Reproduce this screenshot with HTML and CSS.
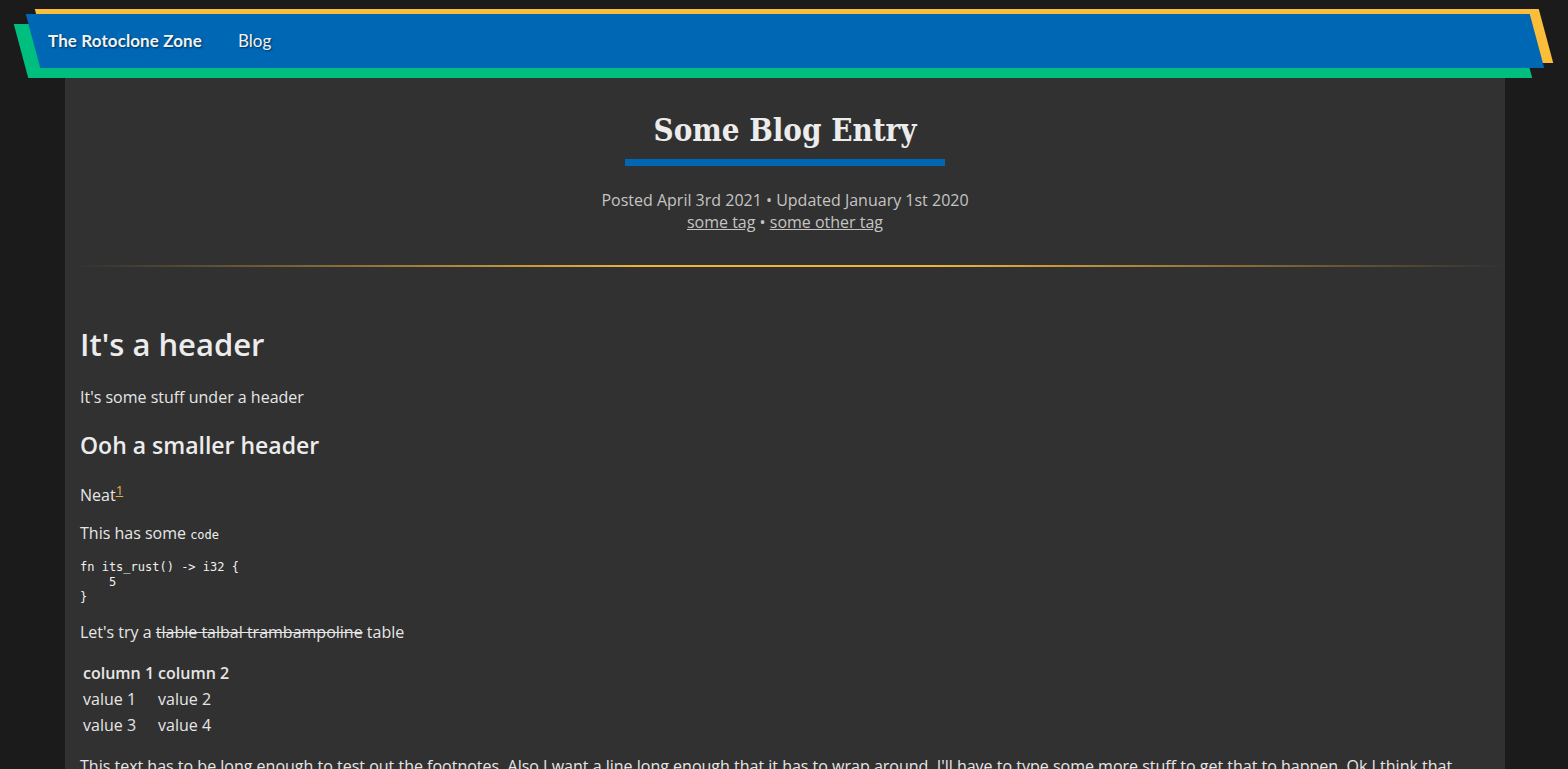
FILE: index.html
```html
<!DOCTYPE html>
<html lang="en">
<head>
<meta charset="utf-8">
<title>Some Blog Entry</title>
<link rel="stylesheet" href="styles.css">
</head>
<body>
<header class="site-header">
  <nav class="navbar">
    <span class="layer layer-yellow"></span>
    <span class="layer layer-green"></span>
    <span class="layer layer-blue"></span>
    <div class="nav-links">
      <a class="brand" href="#">The Rotoclone Zone</a>
      <a class="nav-link" href="#">Blog</a>
    </div>
  </nav>
</header>
<main class="page">
  <section class="post-header">
    <h1 class="post-title">Some Blog Entry</h1>
    <div class="title-bar"></div>
    <div class="post-meta">
      <div>Posted April 3rd 2021 • Updated January 1st 2020</div>
      <div><a href="#">some tag</a> • <a href="#">some other tag</a></div>
    </div>
  </section>
  <hr class="gold-rule">
  <article class="post-body">
    <h1>It's a header</h1>
    <p>It's some stuff under a header</p>
    <h2>Ooh a smaller header</h2>
    <p>Neat<sup><a class="fn" href="#">1</a></sup></p>
    <p>This has some <code>code</code></p>
<pre><code>fn its_rust() -&gt; i32 {
    5
}</code></pre>
    <p>Let's try a <del>tlable talbal trambampoline</del> table</p>
    <table>
      <thead><tr><th>column 1</th><th>column 2</th></tr></thead>
      <tbody>
        <tr><td>value 1</td><td>value 2</td></tr>
        <tr><td>value 3</td><td>value 4</td></tr>
      </tbody>
    </table>
    <p>This text has to be long enough to test out the footnotes. Also I want a line long enough that it has to wrap around. I'll have to type some more stuff to get that to happen. Ok I think that should be enough now, let's see if it wraps.</p>
  </article>
</main>
</body>
</html>
```
FILE: styles.css
```css
html, body {
  margin: 0;
  padding: 0;
}
body {
  background: #1b1b1b;
  color: #e6e6e6;
  font-family: "Open Sans", "Noto Sans", sans-serif;
  font-size: 16px;
  padding-left: 2px;
}
a { color: inherit; }

.site-header {
  padding-top: 14px;
  height: 77px;
  box-sizing: border-box;
  position: relative;
  z-index: 2;
}
.navbar {
  position: relative;
  width: 1504px;
  height: 54px;
  margin: 0 auto;
}
.layer {
  position: absolute;
  inset: 0;
}
.layer-blue { background: #0067b5; transform: skewX(15deg); }
.layer-yellow { background: #fbbe3b; transform: translate(9px, -5px) skewX(15deg); }
.layer-green { background: #00be7d; transform: translate(-12px, 10px) skewX(15deg); }
.nav-links {
  position: relative;
  height: 100%;
  display: flex;
  align-items: center;
  gap: 36px;
  padding-left: 15px;
  padding-bottom: 2px;
  box-sizing: border-box;
  font-family: "Lato", "Open Sans", sans-serif;
  font-size: 17px;
}
.nav-links a {
  text-decoration: none;
  color: #eef3f8;
  text-shadow: 1px 1px 2px rgba(0,0,0,0.55);
}
.brand { font-weight: 700; letter-spacing: 0.1px; }

.page {
  width: 1440px;
  margin: 0 auto;
  background: #313131;
  padding: 0 15px 40px;
  box-sizing: border-box;
}
.post-header {
  text-align: center;
  padding-top: 31px;
  display: flex;
  flex-direction: column;
  align-items: center;
}
.post-title {
  margin: 0;
  font-family: "DejaVu Serif Condensed", "DejaVu Serif", serif;
  font-stretch: condensed;
  font-weight: 700;
  font-size: 31px;
  line-height: 44px;
  color: #ececec;
}
.title-bar {
  width: 320px;
  height: 7px;
  background: #0067b5;
  margin-top: 7px;
}
.post-meta {
  margin-top: 23px;
  color: #c4c4c4;
  font-size: 16px;
  line-height: 22px;
}
.post-meta a { text-decoration: underline; }

.gold-rule {
  border: 0;
  height: 2px;
  margin: 32px -15px 0 -5px;
  background: linear-gradient(to right, rgba(240,180,60,0) 0%, #f0b43c 40%, #f0b43c 60%, rgba(240,180,60,0) 100%);
}

.post-body {
  padding-top: 35px;
}
.post-body h1 {
  font-size: 31px;
  font-weight: 600;
  margin: 21px 0;
  color: #ececec;
}
.post-body h2 {
  font-size: 23px;
  font-weight: 600;
  margin: 21px 0 23px;
  color: #ececec;
}
.post-body p { margin: 16px 0; }
sup { line-height: 0; }
.fn { color: #e4b24a; }
code {
  font-family: "DejaVu Sans Mono", monospace;
  font-size: 12px;
  color: #f0f0f0;
}
pre {
  margin: 16px 0;
  font-family: "DejaVu Sans Mono", monospace;
  font-size: 12px;
  line-height: 15px;
}
pre code { font-size: inherit; }
del { text-decoration: line-through; }
table { border-spacing: 2px; }
th, td { padding: 1px; }
th { font-weight: 600; }
td { text-align: left; }
```
